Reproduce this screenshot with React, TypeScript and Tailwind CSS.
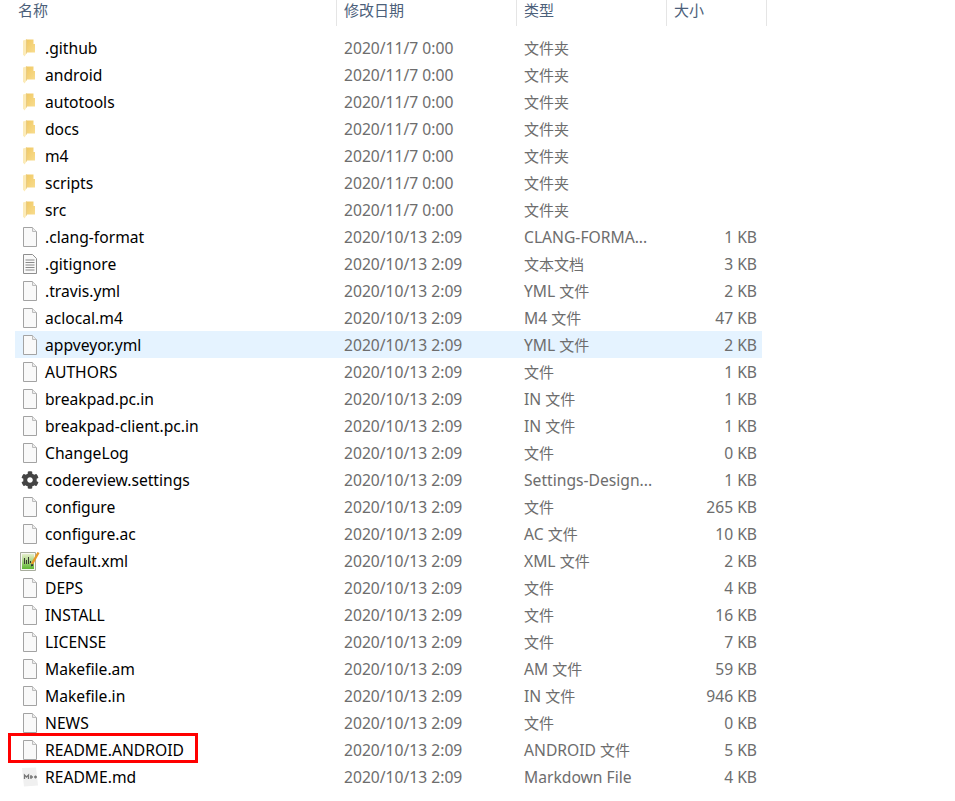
import React from "react";
import { FaCog } from "react-icons/fa";

type Kind = "folder" | "file" | "text" | "gear" | "xml" | "md";
type Row = [string, string, string, string, Kind];

const d1 = "2020/11/7 0:00";
const d2 = "2020/10/13 2:09";
const rows: Row[] = [
  [".github", d1, "文件夹", "", "folder"],
  ["android", d1, "文件夹", "", "folder"],
  ["autotools", d1, "文件夹", "", "folder"],
  ["docs", d1, "文件夹", "", "folder"],
  ["m4", d1, "文件夹", "", "folder"],
  ["scripts", d1, "文件夹", "", "folder"],
  ["src", d1, "文件夹", "", "folder"],
  [".clang-format", d2, "CLANG-FORMA...", "1 KB", "file"],
  [".gitignore", d2, "文本文档", "3 KB", "text"],
  [".travis.yml", d2, "YML 文件", "2 KB", "file"],
  ["aclocal.m4", d2, "M4 文件", "47 KB", "file"],
  ["appveyor.yml", d2, "YML 文件", "2 KB", "file"],
  ["AUTHORS", d2, "文件", "1 KB", "file"],
  ["breakpad.pc.in", d2, "IN 文件", "1 KB", "file"],
  ["breakpad-client.pc.in", d2, "IN 文件", "1 KB", "file"],
  ["ChangeLog", d2, "文件", "0 KB", "file"],
  ["codereview.settings", d2, "Settings-Design...", "1 KB", "gear"],
  ["configure", d2, "文件", "265 KB", "file"],
  ["configure.ac", d2, "AC 文件", "10 KB", "file"],
  ["default.xml", d2, "XML 文件", "2 KB", "xml"],
  ["DEPS", d2, "文件", "4 KB", "file"],
  ["INSTALL", d2, "文件", "16 KB", "file"],
  ["LICENSE", d2, "文件", "7 KB", "file"],
  ["Makefile.am", d2, "AM 文件", "59 KB", "file"],
  ["Makefile.in", d2, "IN 文件", "946 KB", "file"],
  ["NEWS", d2, "文件", "0 KB", "file"],
  ["README.ANDROID", d2, "ANDROID 文件", "5 KB", "file"],
  ["README.md", d2, "Markdown File", "4 KB", "md"],
];

function Mixed({ text }: { text: string }) {
  return (
    <>
      {text.split(/([\u4e00-\u9fff]+)/).map((part, i) =>
        part === "" ? null : /[\u4e00-\u9fff]/.test(part) ? (
          <span key={i} className="text-[15px]">{part}</span>
        ) : (
          <span key={i} className="text-[15.65px]">{part}</span>
        )
      )}
    </>
  );
}

function FileIcon() {
  return (
    <svg width="14" height="20" viewBox="0 0 14 20" className="block">
      <path d="M.5.5H9.5L13.5 4.5V19.5H.5V.5Z" fill="#f9f9f9" stroke="#a3a3a3" />
      <path d="M9.5.5V4.5H13.5" fill="#ececec" stroke="#bcbcbc" />
    </svg>
  );
}

function TextIcon() {
  return (
    <svg width="14" height="20" viewBox="0 0 14 20" className="block">
      <path d="M.5.5H9.5L13.5 4.5V19.5H.5V.5Z" fill="#f9f9f9" stroke="#8f8f8f" />
      <path d="M2.5 6H11.5M2.5 8.5H11.5M2.5 11H11.5M2.5 13.5H11.5M2.5 16H11.5" stroke="#8a8a8a" />
    </svg>
  );
}

function FolderIcon() {
  return (
    <svg width="13" height="18" viewBox="0 0 13 18" className="block">
      <defs>
        <linearGradient id="folderBody" x1="0" y1="0" x2="1" y2="1">
          <stop offset="0" stopColor="#f0c862" />
          <stop offset="1" stopColor="#f8dc8e" />
        </linearGradient>
      </defs>
      <path d="M3 .5H10.5V5H12V13.5H3Z" fill="url(#folderBody)" />
      <path d="M0 1.5L3.5 .5V14.5L1.5 17.5L0 15.5Z" fill="#fcebb8" />
      <path d="M3.5 .5V14.5" stroke="#e6c67c" strokeWidth="0.8" />
    </svg>
  );
}

function XmlIcon() {
  return (
    <svg width="20" height="20" viewBox="0 0 20 20" className="block">
      <defs>
        <linearGradient id="xmlBody" x1="0" y1="0" x2="0" y2="1">
          <stop offset="0" stopColor="#e6efca" />
          <stop offset="1" stopColor="#5fb832" />
        </linearGradient>
      </defs>
      <path d="M.5 1.5H15.5V19.5H.5Z" fill="#f7f8f3" stroke="#a8ad9d" />
      <rect x="2" y="3" width="12" height="15" fill="url(#xmlBody)" />
      <path d="M4.5 7V13M6.5 9V13M8.5 6V13M10.5 10V12" stroke="#3a3a32" />
      <path d="M12 13L18.5 1.5" stroke="#e59a28" strokeWidth="2.5" />
      <path d="M12 13L11.5 15L13.2 14" fill="#333" stroke="#333" />
    </svg>
  );
}

function MdIcon() {
  return (
    <svg width="18" height="20" viewBox="0 0 18 20" className="block">
      <path d="M1 1L15 .5L17 18.5L3 19.5Z" fill="#f0f0f0" />
      <path d="M3.5 12V8L5.5 10L7.5 8V12M10 8V12M9 10H12M13 10H16M14.5 8.5V11.5" stroke="#777777" strokeWidth="1.3" fill="none" />
    </svg>
  );
}

function Icon({ kind }: { kind: Kind }) {
  if (kind === "folder") return <FolderIcon />;
  if (kind === "text") return <TextIcon />;
  if (kind === "gear") return <FaCog size={18} color="#444444" className="block" />;
  if (kind === "xml") return <XmlIcon />;
  if (kind === "md") return <MdIcon />;
  return <FileIcon />;
}

function iconBox(kind: Kind) {
  if (kind === "gear") return "w-[24px] pl-[6px]";
  if (kind === "xml") return "w-[24px] pl-[5px]";
  if (kind === "md") return "w-[24px] pl-[6px]";
  return "w-[24px] pl-[8px]";
}

function HeaderCell({ label, width, pad }: { label: string; width: string; pad: string }) {
  return (
    <div className={`${width} ${pad} h-[26px] border-r border-[#e5e5e5] flex items-center pb-[6px] text-[#4c607a] shrink-0`}>
      {label}
    </div>
  );
}

export default function App() {
  return (
    <div
      className="w-[955px] h-[801px] bg-white overflow-hidden text-[15px] leading-[20px]"
      style={{ fontFamily: '"Noto Sans", "Noto Sans CJK SC", sans-serif' }}
    >
      <div className="flex h-[26px]">
        <HeaderCell label="名称" width="w-[337px]" pad="pl-[18px]" />
        <HeaderCell label="修改日期" width="w-[180px]" pad="pl-[7px]" />
        <HeaderCell label="类型" width="w-[150px]" pad="pl-[7px]" />
        <HeaderCell label="大小" width="w-[100px]" pad="pl-[7px]" />
      </div>
      <div className="pt-[8px] pl-[15px]">
        {rows.map(([name, date, type, size, kind]) => (
          <div
            key={name}
            className={`relative flex items-center h-[27px] w-[747px] ${name === "appveyor.yml" ? "bg-[#e5f3ff]" : ""}`}
          >
            <div className={`${iconBox(kind)} shrink-0`}>
              <Icon kind={kind} />
            </div>
            <div className="w-[305px] pl-[6px] shrink-0 text-black whitespace-nowrap"><Mixed text={name} /></div>
            <div className="w-[180px] shrink-0 text-[#6d6d6d] whitespace-nowrap"><Mixed text={date} /></div>
            <div className="w-[180px] shrink-0 text-[#6d6d6d] whitespace-nowrap"><Mixed text={type} /></div>
            <div className="w-[53px] shrink-0 text-right text-[#6d6d6d] whitespace-nowrap"><Mixed text={size} /></div>
            {name === "README.ANDROID" && (
              <div className="absolute left-[-7px] top-[-3px] w-[190px] h-[30px] border-[3px] border-[#ff0000]" />
            )}
          </div>
        ))}
      </div>
    </div>
  );
}
